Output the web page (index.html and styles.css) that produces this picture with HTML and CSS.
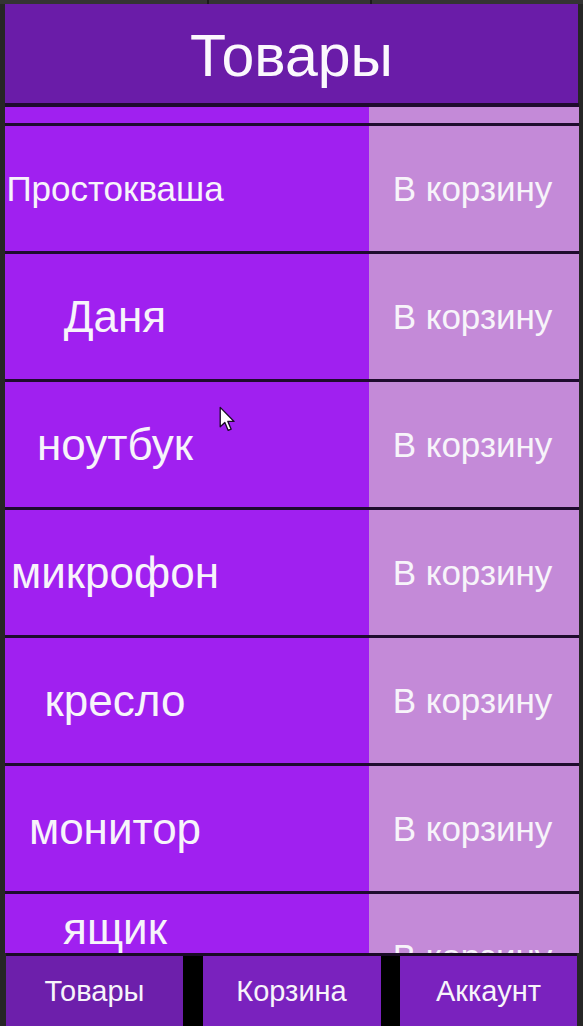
FILE: index.html
```html
<!DOCTYPE html>
<html lang="ru">
<head>
<meta charset="utf-8">
<title>Товары</title>
<link rel="stylesheet" href="styles.css">
</head>
<body>
<div class="screen">
  <div class="topstrip">
    <div class="seg seg-a"></div>
    <div class="seg seg-b"></div>
    <div class="seg seg-c"></div>
  </div>
  <header class="header"><h1 class="title">Товары</h1></header>
  <main class="list">
    <div class="row row--partial">
      <div class="name"></div>
      <div class="action"></div>
    </div>
    <div class="row">
      <div class="name"><span class="label label--long">Простокваша</span></div>
      <div class="action">В корзину</div>
    </div>
    <div class="row">
      <div class="name"><span class="label">Даня</span></div>
      <div class="action">В корзину</div>
    </div>
    <div class="row">
      <div class="name"><span class="label">ноутбук</span></div>
      <div class="action">В корзину</div>
    </div>
    <div class="row">
      <div class="name"><span class="label">микрофон</span></div>
      <div class="action">В корзину</div>
    </div>
    <div class="row">
      <div class="name"><span class="label">кресло</span></div>
      <div class="action">В корзину</div>
    </div>
    <div class="row">
      <div class="name"><span class="label">монитор</span></div>
      <div class="action">В корзину</div>
    </div>
    <div class="row row--clipped">
      <div class="name"><span class="label">ящик</span></div>
      <div class="action">В корзину</div>
    </div>
  </main>
  <nav class="nav">
    <div class="tab tab--active">Товары</div>
    <div class="tab">Корзина</div>
    <div class="tab">Аккаунт</div>
  </nav>
  <svg class="cursor" width="17" height="27" viewBox="0 0 14 22" xmlns="http://www.w3.org/2000/svg">
    <path d="M1 1 L1 17 L4.8 13.4 L7.6 20 L10 19 L7.3 12.6 L12.4 12.6 Z" fill="#ffffff" stroke="#1a0a28" stroke-width="1.1" stroke-linejoin="round"/>
  </svg>
</div>
</body>
</html>
```

FILE: styles.css
```css
* { box-sizing: border-box; margin: 0; padding: 0; }

html, body {
  width: 583px;
  height: 1026px;
  overflow: hidden;
  background: #262626;
}

body {
  font-family: "Liberation Sans", Arial, sans-serif;
  color: #f7f4fa;
}

.screen {
  position: relative;
  width: 583px;
  height: 1026px;
  display: flex;
  flex-direction: column;
  overflow: hidden;
}

.topstrip {
  height: 4px;
  display: flex;
  gap: 2px;
  background: #1b1b1b;
  flex: none;
}
.seg { background: #343434; }
.seg-a { width: 207px; }
.seg-b { width: 161px; }
.seg-c { flex: 1; }

.header {
  flex: none;
  height: 99px;
  margin-left: 5px;
  width: 573px;
  background: #6a1ca8;
  display: flex;
  align-items: center;
  justify-content: center;
}

.title {
  font-weight: normal;
  font-size: 59px;
  line-height: 1;
  padding-top: 5px;
  color: #fbf8fd;
}

.list {
  flex: 1;
  min-height: 0;
  overflow: hidden;
  margin-left: 5px;
  width: 574px;
  background: #1e0b2e;
  padding-top: 4px;
  display: flex;
  flex-direction: column;
  gap: 3px;
}

.row {
  flex: none;
  height: 125px;
  display: grid;
  grid-template-columns: 364px 210px;
}

.row--partial { height: 16px; }

.name {
  background: #a020f0;
  display: flex;
  align-items: center;
}

.label {
  display: block;
  width: 220px;
  text-align: center;
  font-size: 44px;
  line-height: 1;
  white-space: nowrap;
}

.label--long { font-size: 35px; }

.action {
  background: #c48ad8;
  display: flex;
  align-items: center;
  justify-content: center;
  font-size: 35px;
  line-height: 1;
  padding-right: 3px;
  white-space: nowrap;
}

.row--clipped .name {
  align-items: flex-start;
  padding-top: 13px;
}

.nav {
  flex: none;
  height: 73px;
  margin-left: 6px;
  width: 571px;
  border-top: 3px solid #1a0a26;
  background: #000000;
  display: flex;
  justify-content: space-between;
}

.tab {
  width: 177px;
  background: #7a22be;
  display: flex;
  align-items: center;
  justify-content: center;
  font-size: 29px;
  line-height: 1;
}
.tab:nth-child(2) { width: 178px; }
.tab--active { background: #6d1fab; }

.cursor {
  position: absolute;
  left: 219px;
  top: 406px;
}
```
